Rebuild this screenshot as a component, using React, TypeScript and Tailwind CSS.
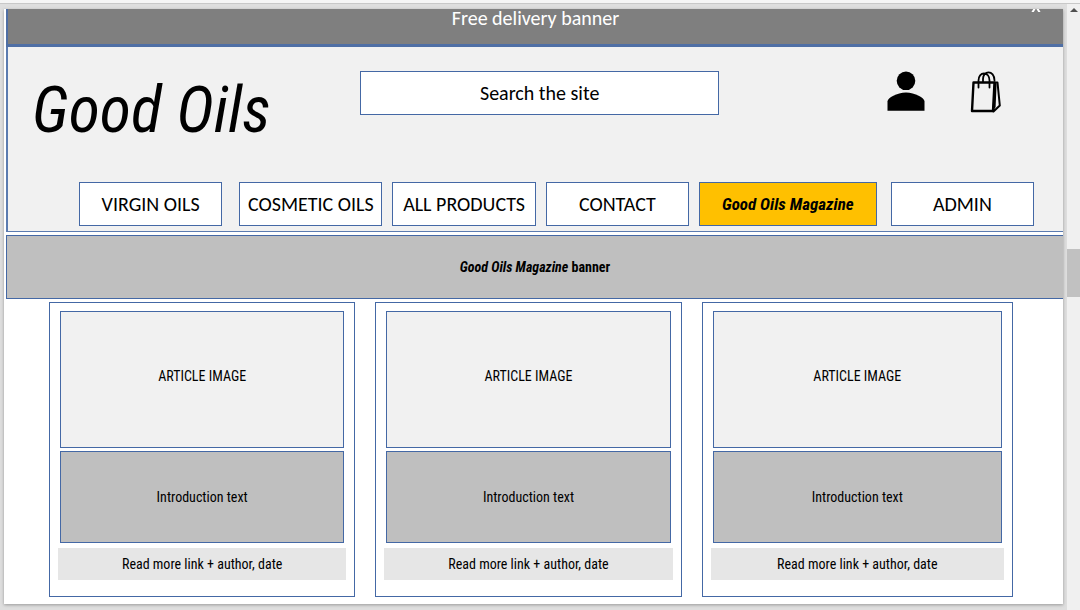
const navItems = [
  { label: "VIRGIN OILS", spacing: "" },
  { label: "COSMETIC OILS", spacing: "ml-[17px]" },
  { label: "ALL PRODUCTS", spacing: "ml-[10px]" },
  { label: "CONTACT", spacing: "ml-[10px]" },
];

const navBox =
  "flex h-11 min-w-0 items-center justify-center whitespace-nowrap border border-[#4468a5] leading-6";
const script = "font-['Roboto_Condensed','Roboto',sans-serif] italic";
const narrow = "font-['Roboto_Condensed','Roboto',sans-serif]";

function PersonIcon() {
  return (
    <svg viewBox="0 0 38 40" className="h-10 w-[38px]" aria-hidden="true">
      <circle cx="19" cy="9.8" r="9.3" />
      <path d="M.5 39.800V30.500C.5 27 10 21.500 19 21.500s18.500 5.500 18.500 9v9.300Z" />
    </svg>
  );
}

function BagIcon() {
  return (
    <svg viewBox="0 0 32 43" className="h-[43px] w-8" fill="none" stroke="black" strokeLinejoin="round" strokeLinecap="round" aria-hidden="true">
      <path d="M3.500 11.500H24.500L23 40H2Z" strokeWidth="2.400" />
      <path d="M25 11.500H27.500L29.800 34.500L23.500 40.500Z" strokeWidth="2" />
      <path d="M25.500 13L24.500 36" strokeWidth="2.200" />
      <path d="M8.500 16.500V9.500C8.500 5 11 2.500 14 2.500S19.500 5 19.500 9.500V16.500M13 10.500V8C13 4 15.500 1.300 18.500 1.300S24.500 4 24.500 9.500" strokeWidth="1.800" />
    </svg>
  );
}

function ArticleCard() {
  return (
    <article className={`border border-[#4468a5] bg-white px-[10px] pt-2 pb-4 text-[14px] leading-6 ${narrow}`}>
      <div className="flex h-[137px] items-center justify-center border border-[#4468a5] bg-[#f1f1f1] pb-2">
        ARTICLE IMAGE
      </div>
      <p className="mt-[3px] flex h-[92px] items-center justify-center border border-[#4468a5] bg-[#bfbfbf]">
        Introduction text
      </p>
      <a href="#article" className="-mx-[2px] mt-[5px] flex h-8 items-center justify-center bg-[#e6e6e6]">
        Read more link + author, date
      </a>
    </article>
  );
}

export default function App() {
  return (
    <div className="flex min-h-screen flex-col bg-[#dedede] font-['Carlito','Lato',sans-serif] text-[20px] text-black">
      <div className="h-1 border-b border-[#c8c8c8] bg-[#f5f5f5]" />
      <div className="flex flex-1">
        <main className="mt-[5px] mr-1 mb-[6px] ml-1 flex-1 bg-white shadow-[0_1px_3px_#999999]">
          <div className="ml-[2px]">
            <div className="flex h-[38px] items-start border-b-3 border-l-2 border-[#4f6fa5] bg-[#7f7f7f] text-white">
              <p className="flex-1 text-center leading-[18px]">Free delivery banner</p>
              <button type="button" aria-label="Close banner" className="-ml-8 mr-[22px]">
                <svg viewBox="0 0 10 3" className="h-[3px] w-[10px]" fill="none" stroke="white" strokeWidth="2" aria-hidden="true">
                  <path d="M1 4L4 -1M9 4L6 -1" />
                </svg>
              </button>
            </div>
            <header className="border-b border-l-2 border-[#5b7bb0] bg-[#f1f1f1] pb-[5px]">
              <div className="flex h-[135px] items-start">
                <h1 className={`w-[352px] shrink-0 pt-6 pl-6 text-[64px] leading-[80px] whitespace-nowrap ${script}`}>
                  Good Oils
                </h1>
                <input
                  type="text"
                  aria-label="Search the site"
                  placeholder="Search the site"
                  className="mt-6 h-11 min-w-0 flex-[359] border border-[#4468a5] bg-white text-center placeholder:text-black placeholder:opacity-100"
                />
                <div className="flex flex-[284] items-start justify-end gap-[45px] pt-6 pr-[61px]">
                  <button type="button" aria-label="Account"><PersonIcon /></button>
                  <button type="button" aria-label="Shopping bag"><BagIcon /></button>
                </div>
              </div>
              <nav aria-label="Main" className="flex pr-[29px] pl-[71px]">
                {navItems.map((item) => (
                  <a key={item.label} href="#products" className={`${navBox} flex-[143] bg-white ${item.spacing}`}>
                    {item.label}
                  </a>
                ))}
                <a href="#magazine" className={`${navBox} ml-[10px] flex-[178] bg-[#ffc000] text-[17px] font-bold ${script}`}>
                  Good Oils Magazine
                </a>
                <a href="#admin" className={`${navBox} ml-[14px] flex-[143] bg-white`}>ADMIN</a>
              </nav>
            </header>
            <section className="mt-[3px] flex h-16 items-center justify-center border-y border-l border-[#4468a5] bg-[#bfbfbf] text-[14px] leading-6 font-bold">
              <h2 className={narrow}>
                <span className={script}>Good Oils Magazine</span> banner
              </h2>
            </section>
          </div>
          <section aria-label="Articles" className="mt-[3px] grid grid-cols-[306fr_306fr_311fr] gap-5 pr-[50px] pb-[7px] pl-[45px]">
            <ArticleCard />
            <ArticleCard />
            <ArticleCard />
          </section>
        </main>
        <div className="flex w-[13px] flex-col items-center bg-[#f0f0f0]" aria-hidden="true">
          <svg viewBox="0 0 8 4" className="mt-1 h-1 w-2" fill="#505050"><path d="M0 4L4 0L8 4Z" /></svg>
          <div className="flex-[237]" />
          <div className="w-full flex-[48] bg-[#c1c1c1]" />
          <div className="flex-[313]" />
        </div>
      </div>
    </div>
  );
}
